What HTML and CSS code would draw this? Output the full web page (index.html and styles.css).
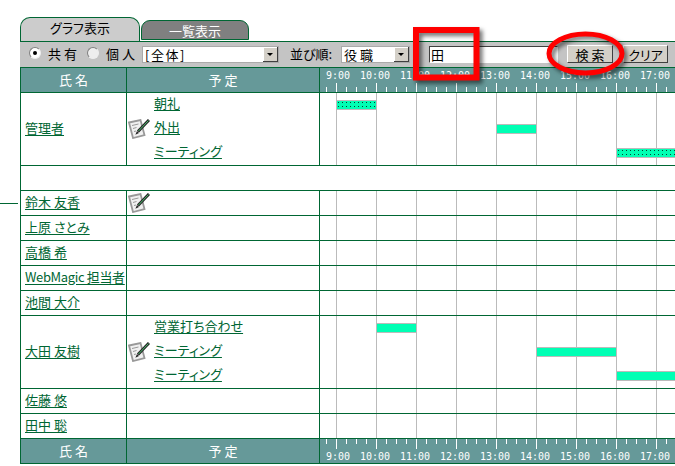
FILE: index.html
```html
<!DOCTYPE html>
<html lang="ja">
<head>
<meta charset="utf-8">
<title>グラフ表示</title>
<link rel="stylesheet" href="styles.css">
</head>
<body>
<svg class="defs" width="0" height="0" aria-hidden="true">
  <symbol id="memo" viewBox="0 0 22 20">
    <polygon points="1,3.5 12.5,1 16.5,16 5,19" fill="#f0f0f0" stroke="#999999" stroke-width="1.8"/>
    <path d="M4 6.5l6.5-1.5M5 9.5l3.5-1M6 12.5l2-.5" stroke="#999999" stroke-width="1" fill="none"/>
    <path d="M21 1L10 12.5" stroke="#262626" stroke-width="3" fill="none"/>
    <path d="M20.5 1.5L10.5 12" stroke="#4cc070" stroke-width="1" fill="none"/>
    <path d="M9 12l2 2-3.6 1.8z" fill="#262626"/>
  </symbol>
</svg>
<main class="page">
  <nav class="tabs">
    <a class="tab tab-on">グラフ表示</a>
    <a class="tab tab-off">一覧表示</a>
  </nav>
  <form class="toolbar">
    <span class="radio radio-on"></span><span class="label label-share">共 有</span>
    <span class="radio radio-second"></span><span class="label label-own">個 人</span>
    <div class="select select-group"><span class="select-text spaced">[全体]</span><span class="arrow"></span></div>
    <span class="label label-sort">並び順:</span>
    <div class="select select-sort"><span class="select-text">役 職</span><span class="arrow"></span></div>
    <input class="search" type="text" value="田">
    <button class="btn btn-search" type="button">検 索</button>
    <button class="btn btn-clear" type="button">クリア</button>
  </form>

  <div class="row head">
    <div class="cell name-h">氏名</div>
    <div class="cell plan-h">予定</div>
    <div class="chart-h">
      <div class="times"><span>9:00</span><span>10:00</span><span>11:00</span><span>12:00</span><span>13:00</span><span>14:00</span><span>15:00</span><span>16:00</span><span>17:00</span></div>
      <div class="ticks"></div>
    </div>
  </div>

  <div class="row tall">
    <div class="cell name"><a>管理者</a></div>
    <div class="cell plan"><svg class="memo"><use href="#memo"/></svg><div class="plans"><a>朝礼</a><a>外出</a><a>ミーティング</a></div></div>
    <div class="chart">
      <div class="lane"><i class="bar dotted" style="margin-left:16px;width:41px"></i></div>
      <div class="lane"><i class="bar" style="margin-left:176px;width:41px"></i></div>
      <div class="lane"><i class="bar dotted" style="margin-left:296px;width:60px"></i></div>
    </div>
  </div>
  <div class="row blank"></div>
  <div class="row"><div class="cell name"><a>鈴木 友香</a></div><div class="cell plan top"><svg class="memo"><use href="#memo"/></svg></div><div class="chart"></div></div>
  <div class="row"><div class="cell name"><a>上原 さとみ</a></div><div class="cell plan"></div><div class="chart"></div></div>
  <div class="row"><div class="cell name"><a>高橋 希</a></div><div class="cell plan"></div><div class="chart"></div></div>
  <div class="row"><div class="cell name"><a class="tight">WebMagic 担当者</a></div><div class="cell plan"></div><div class="chart"></div></div>
  <div class="row"><div class="cell name"><a>池間 大介</a></div><div class="cell plan"></div><div class="chart"></div></div>
  <div class="row tall">
    <div class="cell name"><a>大田 友樹</a></div>
    <div class="cell plan"><svg class="memo"><use href="#memo"/></svg><div class="plans"><a>営業打ち合わせ</a><a>ミーティング</a><a>ミーティング</a></div></div>
    <div class="chart">
      <div class="lane"><i class="bar" style="margin-left:56px;width:41px"></i></div>
      <div class="lane"><i class="bar" style="margin-left:216px;width:81px"></i></div>
      <div class="lane"><i class="bar" style="margin-left:296px;width:60px"></i></div>
    </div>
  </div>
  <div class="row"><div class="cell name"><a>佐藤 悠</a></div><div class="cell plan"></div><div class="chart"></div></div>
  <div class="row"><div class="cell name"><a>田中 聡</a></div><div class="cell plan"></div><div class="chart"></div></div>

  <div class="row foot">
    <div class="cell name-h">氏名</div>
    <div class="cell plan-h">予定</div>
    <div class="chart-h">
      <div class="ticks ticks-down"></div>
      <div class="times"><span>9:00</span><span>10:00</span><span>11:00</span><span>12:00</span><span>13:00</span><span>14:00</span><span>15:00</span><span>16:00</span><span>17:00</span></div>
    </div>
  </div>
</main>
<div class="stub"></div>
<svg class="marks" width="675" height="466" viewBox="0 0 675 466" aria-hidden="true">
  <rect class="mark" x="416" y="30" width="60.5" height="47.5"/>
  <ellipse class="mark mark-oval" cx="585.5" cy="53.5" rx="36.5" ry="19.5"/>
</svg>
</body>
</html>
```

FILE: styles.css
```css
html, body { margin: 0; padding: 0; }
body {
  width: 675px;
  height: 466px;
  overflow: hidden;
  position: relative;
  background: #fff;
  font: 13px/1 "Noto Sans CJK JP", "Liberation Sans", sans-serif;
  color: #000;
}
.defs { position: absolute; }
.page { padding: 17px 0 0 20px; width: 655px; }
a { color: #006633; text-decoration: underline; text-underline-offset: 2px; font-feature-settings: "palt"; }
.tight { letter-spacing: -.35px; }

/* tabs */
.tabs { display: flex; align-items: flex-end; height: 24px; gap: 1px; }
.tab { display: flex; align-items: center; justify-content: center; text-decoration: none; box-sizing: border-box; }
.tab-on {
  width: 120px; height: 24px;
  background: #cccccc; color: #000;
  border: 1px solid #006633; border-bottom: 0;
  border-radius: 10px 10px 0 0;
  padding-bottom: 4px;
}
.tab-off {
  width: 108px; height: 20px; margin-bottom: 1px;
  background: #808080; color: #fff;
  border: 1px solid #006633;
  border-radius: 9px 9px 0 0;
}

/* toolbar */
.toolbar {
  display: flex; align-items: flex-start;
  height: 26px; box-sizing: border-box;
  padding: 4px 0 0 9px;
  background: #c4c4c4;
  border-top: 1px solid #006633;
}
.radio {
  width: 12px; height: 12px; box-sizing: border-box;
  margin-top: 1px;
  border-radius: 50%;
  background: #fff;
  border: 1px solid #808080;
  border-right-color: #eee; border-bottom-color: #eee;
  position: relative;
}
.radio-on::after {
  content: ""; position: absolute; left: 3px; top: 3px;
  width: 4px; height: 4px; border-radius: 50%; background: #000;
}
.radio-second { margin-left: 10px; background: #eee; }
.label { line-height: 16px; white-space: pre; }
.label-share { margin-left: 7px; width: 29px; }
.label-own { margin-left: 7px; width: 29px; }
.label-sort { margin-left: 11px; width: 51px; font-feature-settings: "palt"; }
.select {
  display: flex; height: 17px; box-sizing: border-box;
  background: #fff;
  border: 1px solid; border-color: #404040 #fff #fff #404040;
  outline: 1px solid #aaa; outline-offset: -1px;
}
.select-group { width: 137px; margin-left: 7px; }
.select-sort { width: 69px; }
.select-text { flex: 1; line-height: 15px; padding-left: 2px; }
.spaced { letter-spacing: 1.5px; }
.arrow {
  width: 15px; background: #d4d0c8; position: relative;
  box-shadow: inset -1px -1px #404040, inset 1px 1px #fff;
}
.arrow::after {
  content: ""; position: absolute; left: 4px; top: 6px;
  border: 3px solid transparent; border-top: 3px solid #000; border-bottom: 0;
}
.search {
  width: 129px; height: 17px; box-sizing: border-box;
  margin: 0 0 0 19px; padding: 0 0 0 1px;
  font: inherit; background: #fff;
  border: 1px solid; border-color: #404040 #fff #fff #404040;
}
.btn {
  height: 18px; box-sizing: border-box; margin: -1px 0 0;
  padding: 0; font: inherit; color: #000;
  background: #d4d0c8;
  border: 1px solid; border-color: #fff #404040 #404040 #fff;
}
.btn-search { width: 46px; margin-left: 9px; }
.btn-clear { width: 45px; margin-left: 10px; font-feature-settings: "palt"; }

/* table */
.row {
  display: grid;
  grid-template-columns: 105px 192px 335px;
  column-gap: 1px;
  height: 25px; box-sizing: border-box;
  width: 655px;
  border-left: 1px solid #006633;
  border-bottom: 1px solid #006633;
  background: #006633;
}
.tall { height: 73px; }
.blank { display: block; background: #fff; }
.cell { background: #fff; display: flex; align-items: center; min-width: 0; }
.name { padding: 0 0 4px 4px; white-space: nowrap; box-sizing: border-box; }
.plan { align-items: center; }
.top { align-items: flex-start; padding-top: 2px; }
.memo { width: 22px; height: 20px; flex: none; margin-left: 1px; }
.plans { display: flex; flex-direction: column; align-items: flex-start; margin: 0 0 6px 4px; gap: 11px; white-space: nowrap; }
.chart {
  display: flex; flex-direction: column; gap: 14px;
  padding-top: 7px; box-sizing: border-box;
  overflow: hidden;
  width: 355px;
  background: #fff linear-gradient(90deg, #bbbbbb 1px, transparent 1px) 16px 0 / 40px 100% repeat-x;
}
.lane { height: 10px; display: flex; }
.bar {
  display: block; height: 10px; box-sizing: border-box;
  flex: none;
  background-color: #00ffb4;
  border: 1px solid #bbbbbb;
}
.dotted {
  background-image: radial-gradient(circle at 1.5px 1.5px, #004433 .8px, transparent 1px);
  background-size: 4px 4px;
}

/* header + footer */
.head { height: 26px; border-top: 1px solid #006633; }
.head .chart-h { padding-top: 2px; }
.foot { height: 25px; }
.name-h, .plan-h {
  background: #669999; color: #fff;
  justify-content: center; letter-spacing: 3px; text-indent: 3px;
  padding-bottom: 2px; box-sizing: border-box;
}
.chart-h {
  background: #669999; color: #fff;
  width: 355px; overflow: hidden;
  display: flex; flex-direction: column; box-sizing: border-box;
}
.times {
  display: flex; margin-left: -10px; height: 12px;
  font: 10px/12px "DejaVu Sans Mono", "Liberation Mono", monospace;
}
.times span { width: 40px; flex: none; text-align: right; }
.ticks {
  height: 9px; margin-top: auto;
  background:
    linear-gradient(90deg, #fff 1px, transparent 1px) 16px 0 / 40px 100% repeat-x,
    linear-gradient(90deg, #fff 1px, transparent 1px) 6px 4px / 10px 5px repeat-x;
}
.ticks-down {
  flex: none;
  margin-top: 0; height: 10px; margin-bottom: 2px;
  background:
    linear-gradient(90deg, #fff 1px, transparent 1px) 16px 0 / 40px 100% repeat-x,
    linear-gradient(90deg, #fff 1px, transparent 1px) 6px 0 / 10px 5px repeat-x;
}

/* annotations lying over the page */
.stub { position: absolute; left: 0; top: 203px; width: 18px; height: 1px; background: #006633; }
.marks { position: absolute; left: 0; top: 0; pointer-events: none; }
.mark {
  fill: none; stroke: #ff0000; stroke-width: 6;
  filter: drop-shadow(3px 3px 2px rgba(0,0,0,.55));
}
.mark-oval { stroke-width: 5; }
```
